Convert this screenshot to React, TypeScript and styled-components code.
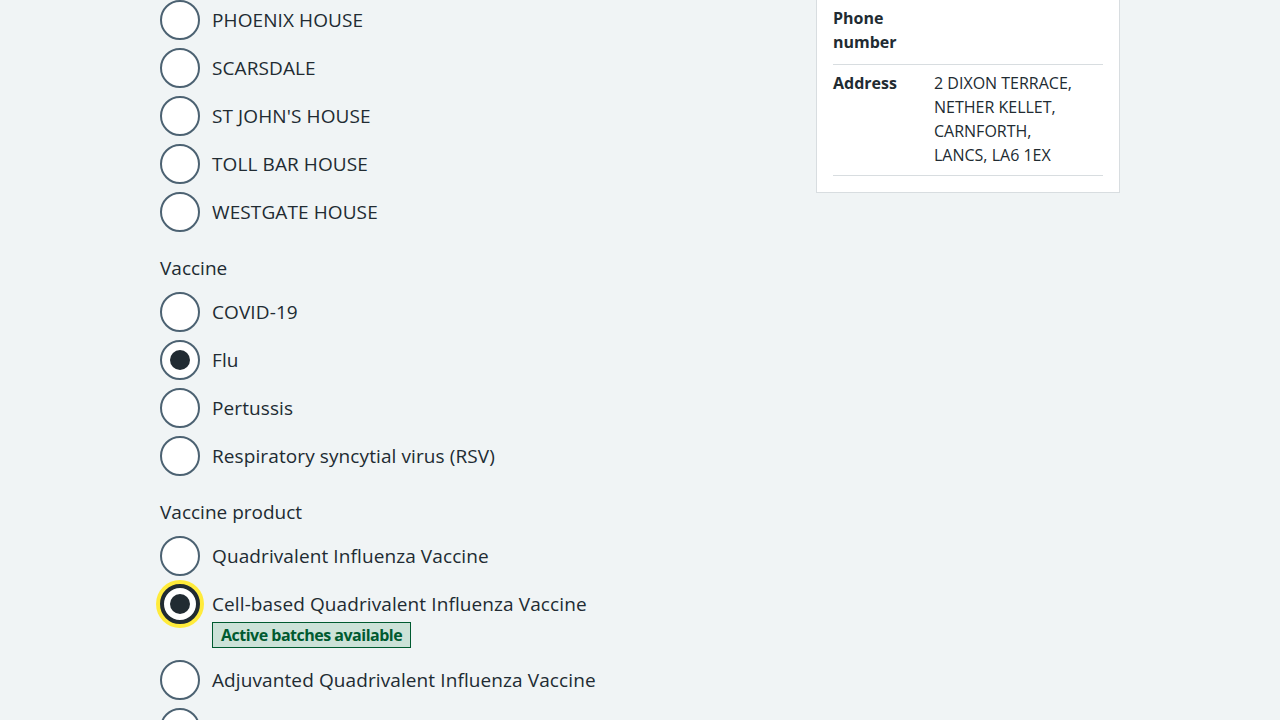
import React from "react";
import styled, { createGlobalStyle } from "styled-components";

const GlobalStyle = createGlobalStyle`
  html, body { margin: 0; padding: 0; background: #f0f4f5; }
  body {
    font-family: "Open Sans", "Liberation Sans", Arial, sans-serif;
    color: #212b32;
    overflow: hidden;
    height: 720px;
  }
  * { box-sizing: border-box; }
`;

const Page = styled.div`
  width: 960px;
  margin: 0 auto;
  display: grid;
  grid-template-columns: 1fr 304px;
  column-gap: 16px;
  align-items: start;
`;

const Main = styled.main`
  display: flex;
  flex-direction: column;
`;

const FormGroup = styled.fieldset`
  border: 0;
  margin: 0 0 24px;
  padding: 0;
  min-width: 0;
`;

const Legend = styled.legend`
  padding: 0 0 4px;
  margin: 0 0 8px;
  font-size: 19px;
  line-height: 24px;
`;

const Radios = styled.div`
  display: flex;
  flex-direction: column;
  gap: 8px;
`;

const Item = styled.label`
  display: flex;
  align-items: flex-start;
  gap: 12px;
  cursor: pointer;
`;

const Circle = styled.span<{ $checked?: boolean; $focused?: boolean }>`
  flex: none;
  width: 40px;
  height: 40px;
  border-radius: 50%;
  background: #ffffff;
  border: ${(p) => (p.$focused ? "4px solid #212b32" : "2px solid #4c6272")};
  box-shadow: ${(p) => (p.$focused ? "0 0 0 4px #ffeb3b" : "none")};
  display: flex;
  align-items: center;
  justify-content: center;
  &::after {
    content: "";
    display: ${(p) => (p.$checked ? "block" : "none")};
    width: 20px;
    height: 20px;
    border-radius: 50%;
    background: #212b32;
  }
`;

const Content = styled.span<{ $extra?: boolean }>`
  display: flex;
  flex-direction: column;
  align-items: flex-start;
  padding-bottom: ${(p) => (p.$extra ? "4px" : "0")};
`;

const LabelText = styled.span`
  font-size: 19px;
  line-height: 40px;
  letter-spacing: 0.1px;
`;

const Tag = styled.strong`
  margin-top: -2px;
  display: inline-block;
  background: #cce2d8;
  border: 1px solid #005a30;
  color: #005a30;
  font-size: 16px;
  font-weight: 700;
  line-height: 24px;
  letter-spacing: -0.5px;
  padding: 0 8px;
`;

const Aside = styled.aside`
  margin-top: -16px;
  background: #ffffff;
  border: 1px solid #d8dde0;
  padding: 16px;
`;

const SummaryList = styled.dl`
  margin: 0;
  font-size: 16px;
  line-height: 24px;
`;

const Row = styled.div`
  display: grid;
  grid-template-columns: 101px 1fr;
  border-bottom: 1px solid #d8dde0;
  padding: 6px 0 8px;
  &:first-child {
    padding: 5px 0 10px;
  }
`;

const Key = styled.dt`
  font-weight: 700;
  padding-right: 24px;
`;

const Value = styled.dd`
  margin: 0;
`;

type Opt = { label: string; checked?: boolean; focused?: boolean; tag?: string };

const RadioItem: React.FC<Opt> = ({ label, checked, focused, tag }) => (
  <Item>
    <Circle $checked={checked} $focused={focused} />
    <Content $extra={!!tag}>
      <LabelText>{label}</LabelText>
      {tag && <Tag>{tag}</Tag>}
    </Content>
  </Item>
);

const sites: Opt[] = [
  { label: "PHOENIX HOUSE" },
  { label: "SCARSDALE" },
  { label: "ST JOHN'S HOUSE" },
  { label: "TOLL BAR HOUSE" },
  { label: "WESTGATE HOUSE" },
];

const vaccines: Opt[] = [
  { label: "COVID-19" },
  { label: "Flu", checked: true },
  { label: "Pertussis" },
  { label: "Respiratory syncytial virus (RSV)" },
];

const products: Opt[] = [
  { label: "Quadrivalent Influenza Vaccine" },
  {
    label: "Cell-based Quadrivalent Influenza Vaccine",
    checked: true,
    focused: true,
    tag: "Active batches available",
  },
  { label: "Adjuvanted Quadrivalent Influenza Vaccine" },
  { label: "Cell-based Trivalent Influenza Vaccine" },
];

export default function App() {
  return (
    <>
      <GlobalStyle />
      <Page>
        <Main>
          <FormGroup>
            <Radios>
              {sites.map((o) => (
                <RadioItem key={o.label} {...o} />
              ))}
            </Radios>
          </FormGroup>
          <FormGroup>
            <Legend>Vaccine</Legend>
            <Radios>
              {vaccines.map((o) => (
                <RadioItem key={o.label} {...o} />
              ))}
            </Radios>
          </FormGroup>
          <FormGroup>
            <Legend>Vaccine product</Legend>
            <Radios>
              {products.map((o) => (
                <RadioItem key={o.label} {...o} />
              ))}
            </Radios>
          </FormGroup>
        </Main>
        <Aside>
          <SummaryList>
            <Row>
              <Key>Phone number</Key>
              <Value></Value>
            </Row>
            <Row>
              <Key>Address</Key>
              <Value>
                2 DIXON TERRACE,
                <br />
                NETHER KELLET,
                <br />
                CARNFORTH,
                <br />
                LANCS, LA6 1EX
              </Value>
            </Row>
          </SummaryList>
        </Aside>
      </Page>
    </>
  );
}
